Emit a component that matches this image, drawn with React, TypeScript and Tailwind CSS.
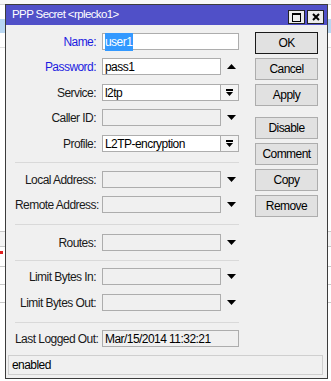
import React from "react";

const font = { fontFamily: '"Liberation Sans", Arial, sans-serif' };

function Down() {
  return (
    <svg width="9" height="5" viewBox="0 0 9 5">
      <path d="M0 0h9L4.5 5z" fill="#000" />
    </svg>
  );
}

function Up() {
  return (
    <svg width="9" height="5" viewBox="0 0 9 5">
      <path d="M0 5h9L4.5 0z" fill="#000" />
    </svg>
  );
}

function Field({
  label,
  value,
  blue,
  white,
  arrow,
  selected,
}: {
  label: string;
  value?: string;
  blue?: boolean;
  white?: boolean;
  arrow?: "up" | "down" | "combo";
  selected?: boolean;
}) {
  return (
    <div className="flex h-[17px] items-center">
      <div
        className={`w-[81px] whitespace-nowrap text-right ${
          blue ? "text-[#1c1ce0]" : "text-[#1a1a1a]"
        }`}
      >
        {label}:
      </div>
      <div
        className={`ml-[6px] flex h-[17px] items-center border border-[#adadad] pl-[2px] text-black ${
          white ? "bg-white" : "bg-[#f0f0f0]"
        } ${arrow ? "w-[119px]" : "w-[137px]"}`}
      >
        {selected ? (
          <span className="bg-[#3399ff] pr-[1px] text-white">{value}</span>
        ) : (
          value
        )}
      </div>
      {arrow === "combo" && (
        <div className="flex h-[17px] w-[18px] flex-col items-center justify-center border border-l-0 border-[#adadad] bg-[#f4f4f4]">
          <div className="h-[2px] w-[7px] bg-black" />
          <svg width="7" height="4" viewBox="0 0 7 4" className="mt-[1px]">
            <path d="M0 0h7L3.5 4z" fill="#000" />
          </svg>
        </div>
      )}
      {(arrow === "up" || arrow === "down") && (
        <div className="flex w-[18px] items-center justify-center pl-[2px]">
          {arrow === "up" ? <Up /> : <Down />}
        </div>
      )}
    </div>
  );
}

function Sep({ className }: { className: string }) {
  return <div className={`h-px w-[224px] bg-[#d9d9d9] ${className}`} />;
}

function Btn({ label, main, className }: { label: string; main?: boolean; className?: string }) {
  return (
    <div
      className={`flex h-[22px] w-[63px] items-center justify-center border bg-[#e1e1e1] text-black ${
        main ? "border-[#1a1a1a]" : "border-[#adadad]"
      } ${className ?? ""}`}
    >
      {label}
    </div>
  );
}

export default function App() {
  return (
    <div
      className="relative h-[381px] w-[331px] overflow-hidden bg-white text-[12px] tracking-[-0.55px]"
      style={font}
    >
      {/* table behind the dialog */}
      <div className="flex flex-col">
        <div className="h-[5px] border-b border-[#d4d4d4] bg-[#f7f7f7]" />
        <div className="h-[14px]" />
        <div className="h-[14px] bg-[#b9d7f2]" />
        <div className="h-[15px] border-b border-[#e0e0e0]" />
        <div className="h-[184px] border-b border-[#c8c8c8]" />
        <div className="h-[15px] border-b border-[#c8c8c8] bg-[#f4f4f4]" />
        <div className="h-[20px] border-b border-[#c8c8c8]">
          <div className="mt-[4px] h-[3px] w-[3px] bg-[#e02020]" />
        </div>
        <div className="h-[18px] border-b border-[#c8c8c8]" />
        <div className="h-[18px] border-b border-[#c8c8c8]" />
      </div>

      {/* dialog window */}
      <div className="absolute left-[5px] top-[4px] flex h-[375px] w-[323px] flex-col border border-[#3c3c3c] bg-[#f0f0f0]">
        <div className="flex h-[20px] items-center bg-[#5050c8] pl-[6px] pr-[3px]">
          <span className="text-[11.5px] tracking-[-0.6px] text-white">PPP Secret &lt;rplecko1&gt;</span>
          <div className="ml-auto mt-[4px] flex gap-[2px]">
            <div className="flex h-[14px] w-[17px] items-center justify-center border border-[#222] bg-[#ececec]">
              <div className="h-[9px] w-[9px] border border-t-2 border-black" />
            </div>
            <div className="flex h-[14px] w-[17px] items-center justify-center border border-[#222] bg-[#ececec]">
              <svg width="8" height="8" viewBox="0 0 8 8">
                <path d="M1 1l6 6M7 1L1 7" stroke="#000" strokeWidth="2" />
              </svg>
            </div>
          </div>
        </div>

        <div className="flex pl-[9px] pt-[7px]">
          <div className="mt-[1px] flex w-[224px] flex-col">
            <Field label="Name" value="user1" blue white selected />
            <div className="mt-[8px]" />
            <Field label="Password" value="pass1" blue white arrow="up" />
            <div className="mt-[9px]" />
            <Field label="Service" value="l2tp" white arrow="combo" />
            <div className="mt-[8px]" />
            <Field label="Caller ID" arrow="down" />
            <div className="mt-[9px]" />
            <Field label="Profile" value="L2TP-encryption" white arrow="combo" />
            <Sep className="mt-[10px]" />
            <div className="mt-[8px]" />
            <Field label="Local Address" arrow="down" />
            <div className="mt-[8px]" />
            <Field label="Remote Address" arrow="down" />
            <Sep className="mt-[11px]" />
            <div className="mt-[9px]" />
            <Field label="Routes" arrow="down" />
            <Sep className="mt-[9px]" />
            <div className="mt-[7px]" />
            <Field label="Limit Bytes In" arrow="down" />
            <div className="mt-[9px]" />
            <Field label="Limit Bytes Out" arrow="down" />
            <Sep className="mt-[11px]" />
            <div className="mt-[7px]" />
            <Field label="Last Logged Out" value="Mar/15/2014 11:32:21" />
          </div>

          <div className="ml-[16px] flex flex-col">
            <Btn label="OK" main />
            <Btn label="Cancel" className="mt-[4px]" />
            <Btn label="Apply" className="mt-[4px]" />
            <Btn label="Disable" className="mt-[11px]" />
            <Btn label="Comment" className="mt-[4px]" />
            <Btn label="Copy" className="mt-[4px]" />
            <Btn label="Remove" className="mt-[4px]" />
          </div>
        </div>

        <div className="ml-[2px] mt-[8px] flex h-[20px] w-[315px] items-center border border-[#cfcfcf] pl-[3px] text-black">
          enabled
        </div>
      </div>
    </div>
  );
}
